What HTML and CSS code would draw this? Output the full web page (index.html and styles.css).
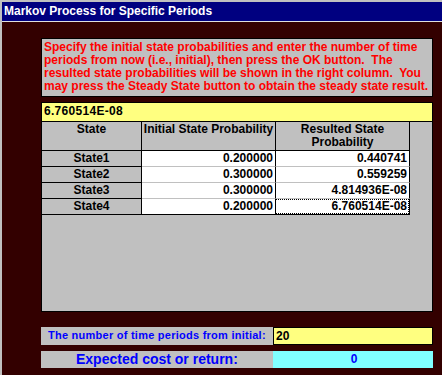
FILE: index.html
```html
<!DOCTYPE html>
<html lang="en">

<head>
    <meta charset="utf-8">
    <title>Markov Process for Specific Periods</title>
    <link rel="stylesheet" href="styles.css">
</head>

<body>

    <div class="vindue">
        <div class="titel">Markov Process for Specific Periods</div>

        <div class="indhold">
            <div class="besked">
                Specify the initial state probabilities and enter the number of time<br>
                periods from now (i.e., initial), then press the OK button.&nbsp; The<br>
                resulted state probabilities will be shown in the right column.&nbsp; You<br>
                may press the Steady State button to obtain the steady state result.
            </div>

            <div class="aktuel">6.760514E-08</div>

            <div class="gitter">
                <div class="tabel">
                    <div class="hoved">State</div>
                    <div class="hoved">Initial State Probability</div>
                    <div class="hoved">Resulted State Probability</div>

                    <div class="navn">State1</div>
                    <div class="tal">0.200000</div>
                    <div class="tal">0.440741</div>

                    <div class="navn">State2</div>
                    <div class="tal">0.300000</div>
                    <div class="tal">0.559259</div>

                    <div class="navn">State3</div>
                    <div class="tal">0.300000</div>
                    <div class="tal">4.814936E-08</div>

                    <div class="navn sidst">State4</div>
                    <div class="tal sidst">0.200000</div>
                    <div class="tal sidst"><span class="fokus">6.760514E-08</span></div>
                </div>
            </div>

            <div class="linje perioder">
                <div class="etiket">The number of time periods from initial:</div>
                <div class="felt">20</div>
            </div>

            <div class="linje resultat">
                <div class="etiket stor">Expected cost or return:</div>
                <div class="felt cyan">0</div>
            </div>
        </div>
    </div>

</body>

</html>
```

FILE: styles.css
```css
body * {
    box-sizing: border-box;
}

body {
    margin: 0;
    padding: 0;
    background-color: #330000;
    font-family: "Liberation Sans", Arial, sans-serif;
    font-weight: bold;
}

.vindue {
    width: 442px;
    height: 375px;
    border-top: 2px solid #c0c0c0;
    border-left: 2px solid #c0c0c0;
}

.titel {
    height: 20px;
    background-color: #000080;
    border-bottom: 1px solid #dfdfdf;
    color: white;
    font-size: 12px;
    line-height: 19px;
    padding-left: 2px;
}

.indhold {
    padding-left: 39px;
    width: 431px;
}

.besked {
    margin-top: 16px;
    height: 59px;
    border: 1px solid black;
    background-color: #c0c0c0;
    color: #ff0000;
    font-size: 12px;
    line-height: 13px;
    white-space: nowrap;
    padding: 2px 0 0 2px;
}

.aktuel {
    margin-top: 5px;
    height: 19px;
    border: 1px solid black;
    border-bottom: none;
    background-color: #ffff80;
    color: black;
    font-size: 12px;
    letter-spacing: 0.3px;
    line-height: 17px;
    padding-left: 2px;
}

.gitter {
    height: 191px;
    border: 1px solid black;
    background-color: #c0c0c0;
}

.tabel {
    display: grid;
    grid-template-columns: 100px 134px 134px;
    grid-template-rows: 29px repeat(4, 16px);
    font-size: 12px;
}

.hoved {
    border-right: 1px solid black;
    border-bottom: 1px solid black;
    text-align: center;
    line-height: 13px;
    padding-top: 1px;
}

.navn {
    border-right: 1px solid black;
    border-bottom: 1px solid black;
    text-align: center;
    line-height: 15px;
}

.tal {
    background-color: white;
    border-right: 1px solid black;
    border-bottom: 1px solid #c0c0c0;
    text-align: right;
    line-height: 15px;
    padding-right: 2px;
}

.sidst {
    border-bottom: 1px solid black;
}

.fokus {
    display: block;
    margin-left: -1px;
    margin-right: -2px;
    padding-right: 2px;
    outline: 1px dotted black;
    outline-offset: -1px;
    height: 15px;
}

.linje {
    display: flex;
    height: 18px;
}

.perioder {
    margin-top: 15px;
}

.resultat {
    margin-top: 6px;
    height: 17px;
}

.etiket {
    width: 232px;
    background-color: #c0c0c0;
    color: #0000ff;
    font-size: 11px;
    letter-spacing: 0.25px;
    white-space: nowrap;
    line-height: 17px;
    padding-left: 7px;
}

.etiket.stor {
    font-size: 14px;
    letter-spacing: 0;
    padding-left: 35px;
}

.felt {
    flex: 1;
    background-color: #ffff80;
    border: 1px solid black;
    font-size: 12px;
    line-height: 16px;
    padding-left: 2px;
}

.felt.cyan {
    background-color: #80ffff;
    border: none;
    color: #0000ff;
    text-align: center;
    line-height: 17px;
}
```
